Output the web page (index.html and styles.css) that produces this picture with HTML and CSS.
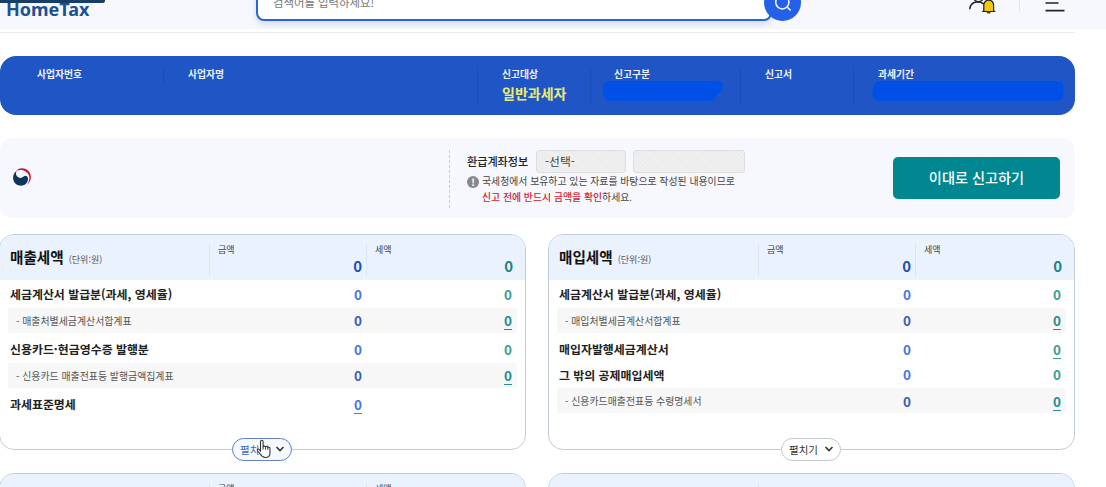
FILE: index.html
```html
<!DOCTYPE html>
<html lang="ko">
<head>
  <meta charset="UTF-8" />
  <meta name="viewport" content="width=device-width, initial-scale=1.0" />
  <title>HomeTax</title>
  <link rel="stylesheet" href="styles.css">
</head>
<body>
  <div class="top-strip"></div>
  <header class="header">
    <div class="logo">HomeTax</div>
    <div class="search">
      <div class="search-box">검색어를 입력하세요!</div>
      <div class="search-btn">
        <svg width="20" height="20" viewBox="0 0 20 20" fill="none" stroke="#fff" stroke-width="1.5" stroke-linecap="round">
          <circle cx="9.3" cy="9.3" r="6.6" />
          <path d="M14 14l3.2 3" />
        </svg>
      </div>
    </div>
    <div class="tools">
      <svg class="user-icon" width="30" height="26" viewBox="0 0 30 26" fill="none" stroke="#222" stroke-width="1.5" stroke-linecap="round">
        <circle cx="10.5" cy="9" r="4.7" />
        <path d="M1.800 20.700c.6-4.200 3.200-6.500 7.200-7 3.200 0 5 .600 6.500 2.300" />
        <path d="M15.800 22.700V17a4.900 4.900 0 0 1 9.800 0v5.700l.8.800h-11.400z" fill="#f2c80f" stroke-width="1.200" />
        <path d="M19.500 24.600h2.400" stroke="#5c4a00" stroke-width="1.600" />
      </svg>
      <span class="tools-line"></span>
      <svg class="menu-icon" width="20" height="20" viewBox="0 0 20 20" stroke="#222" stroke-width="1.7">
        <path d="M0.500 3.300h19M0.500 11h13M0.500 18.600h19" />
      </svg>
    </div>
  </header>

  <main class="content">
    <section class="info-bar">
      <div class="info-item item-no"><span class="info-label">사업자번호</span></div>
      <div class="info-item item-name"><span class="info-label">사업자명</span></div>
      <div class="info-item item-target">
        <span class="info-label">신고대상</span>
        <strong class="info-value">일반과세자</strong>
      </div>
      <div class="info-item item-type">
        <span class="info-label">신고구분</span>
        <svg class="mask" width="121" height="21" viewBox="0 0 121 21"><path d="M7 0h107c9 0 6 11 0 13-1 5-3 7-7 7H8c-6 0-8-4-8-10s2-10 7-10z" fill="#004fe6" /></svg>
      </div>
      <div class="info-item item-form"><span class="info-label">신고서</span></div>
      <div class="info-item item-period">
        <span class="info-label">과세기간</span>
        <svg class="mask" width="193" height="21" viewBox="0 0 193 21"><path d="M8 0h176c6 0 8 4 7 9 2 7-1 11-7 11H7c-6 0-8-6-6-11 0-5 2-9 7-9z" fill="#004fe6" /></svg>
      </div>
    </section>

    <section class="report">
      <svg class="emblem" width="18" height="18" viewBox="0 0 18 18">
        <path d="M3 2.800C8-2.200 17.500.500 17.900 9c0 4-2 6.600-4.300 8.100 2.300-2.600 3.500-6.400 2.300-9.600C14 2.600 8 .900 3 2.800z" fill="#c9163a" />
        <path d="M3.600 3C-.900 6-1.200 12.800 3.300 16.200c4.700 3.300 11.500.600 11.700-5.300.100-2.700-2.600-4-4.400-2.400-1.500 1.400-3.100 1.800-4.900 1C3 8.300 2.400 5.400 3.600 3z" fill="#0c3559" />
      </svg>
      <div class="account">
        <div class="account-row">
          <span class="account-label">환급계좌정보</span>
          <span class="field field-select">-선택-</span>
          <span class="field field-input"></span>
        </div>
        <div class="notice">
          <span class="notice-icon">!</span>
          <p>국세청에서 보유하고 있는 자료를 바탕으로 작성된 내용이므로<br><em>신고 전에 반드시 금액을 확인</em>하세요.</p>
        </div>
      </div>
      <button class="submit-btn">이대로 신고하기</button>
    </section>

    <section class="cards">
      <div class="card">
        <div class="card-head">
          <h2>매출세액 <small>(단위:원)</small></h2>
          <div class="head-cell"><span>금액</span><b class="amount">0</b></div>
          <div class="head-cell"><span>세액</span><b class="tax">0</b></div>
        </div>
        <div class="card-body">
          <div class="row"><span>세금계산서 발급분(과세, 영세율)</span><b>0</b><b>0</b></div>
          <div class="row sub"><span>- 매출처별세금계산서합계표</span><b>0</b><b><u>0</u></b></div>
          <div class="row"><span>신용카드·현금영수증 발행분</span><b>0</b><b>0</b></div>
          <div class="row sub"><span>- 신용카드 매출전표등 발행금액집계표</span><b>0</b><b><u>0</u></b></div>
          <div class="row"><span>과세표준명세</span><b><u>0</u></b></div>
        </div>
        <button class="more active">펼치기
          <svg width="10" height="6" viewBox="0 0 10 6"><path d="M1.500 1l3.500 3.600L8.500 1" /></svg>
        </button>
        <svg class="cursor" width="16" height="20" viewBox="0 0 16 20">
          <path d="M4.500 12V2.700c0-2 2.600-2 2.600 0V8c.200-1.300 2.300-1.200 2.400.300.300-1.200 2.200-1 2.300.500.400-1 2.100-.800 2.200.700v4.200c0 3.200-1.800 4.800-4.600 4.800-2.700 0-3.800-1.200-5-3.200L1.500 11.800c-.800-1.500.900-2.300 1.800-1.200z" fill="#fff" stroke="#333" stroke-width="1.100" />
          <path d="M7.100 8v2.500M9.500 8.300v2.300M11.800 8.800v2" stroke="#333" stroke-width="1" />
        </svg>
      </div>

      <div class="card">
        <div class="card-head">
          <h2>매입세액 <small>(단위:원)</small></h2>
          <div class="head-cell"><span>금액</span><b class="amount">0</b></div>
          <div class="head-cell"><span>세액</span><b class="tax">0</b></div>
        </div>
        <div class="card-body">
          <div class="row"><span>세금계산서 발급분(과세, 영세율)</span><b>0</b><b>0</b></div>
          <div class="row sub"><span>- 매입처별세금계산서합계표</span><b>0</b><b><u>0</u></b></div>
          <div class="row"><span>매입자발행세금계산서</span><b>0</b><b><u>0</u></b></div>
          <div class="row"><span>그 밖의 공제매입세액</span><b>0</b><b>0</b></div>
          <div class="row sub"><span>- 신용카드매출전표등 수령명세서</span><b>0</b><b><u>0</u></b></div>
        </div>
        <button class="more">펼치기
          <svg width="10" height="6" viewBox="0 0 10 6"><path d="M1.500 1l3.500 3.600L8.500 1" /></svg>
        </button>
      </div>

      <div class="card">
        <div class="card-head">
          <h2></h2>
          <div class="head-cell"><span>금액</span></div>
          <div class="head-cell"><span>세액</span></div>
        </div>
      </div>

      <div class="card">
        <div class="card-head">
          <h2></h2>
          <div class="head-cell"></div>
          <div class="head-cell no-line"></div>
        </div>
      </div>
    </section>
  </main>
</body>
</html>
```

FILE: styles.css
```css
* {
  box-sizing: border-box;
}
html {
  height: 100%;
  overflow: hidden;
}
body {
  height: 100%;
  margin: 0;
  overflow: hidden;
  font-family: 'Noto Sans CJK KR', 'Noto Sans', sans-serif;
  font-size: 10px;
  color: #222;
  background-color: #fff;
}
h2, p {
  margin: 0;
}
button {
  font-family: inherit;
  padding: 0;
}

/* header, scrolled partly out of view */
.top-strip {
  position: absolute;
  left: 0;
  top: 0;
  width: 105px;
  height: 3px;
  background-color: #173e68;
  border-radius: 0 0 2px 0;
  z-index: 2;
}
.header {
  display: flex;
  height: 61px;
  margin-top: -32px;
  background-color: #f7f8fe;
}
.logo {
  width: 256px;
  padding: 27px 0 0 6px;
  font-family: 'Noto Sans', sans-serif;
  font-size: 18px;
  font-weight: 700;
  line-height: 28px;
  color: #1b5294;
}
.search {
  display: flex;
  padding-top: 11px;
}
.search-box {
  width: 516px;
  height: 42px;
  padding-left: 15px;
  border: 2px solid #2b63cf;
  border-radius: 8px;
  background-color: #fff;
  box-shadow: 0 3px 6px rgba(40, 70, 120, 0.16);
  font-size: 11.4px;
  line-height: 43px;
  color: #777;
}
.search-btn {
  display: flex;
  align-items: center;
  justify-content: center;
  width: 37px;
  height: 37px;
  margin: 5px 0 0 -8px;
  border-radius: 50%;
  background-color: #2461e8;
}
.tools {
  display: flex;
  align-items: flex-start;
  margin-left: 167px;
}
.user-icon {
  margin-top: 20px;
}
.tools-line {
  width: 1px;
  height: 18px;
  margin: 25px 25px 0 21px;
  background-color: #e3e4ea;
}
.menu-icon {
  margin-top: 23.5px;
}

.content {
  width: 1075px;
  margin-top: 3px;
  padding-top: 23px;
  border-top: 1px solid #ececf0;
}

/* taxpayer bar */
.info-bar {
  display: flex;
  height: 59px;
  padding-top: 11px;
  border-radius: 16px;
  background-color: #1f55c4;
  color: #fff;
}
.info-item {
  display: flex;
  flex-direction: column;
  position: relative;
  height: 37px;
  padding-left: 24px;
  border-left: 1px solid #1c4db4;
}
.info-item:first-child {
  border-left: 0;
  padding-left: 37px;
}
.item-no { width: 163px; }
.item-name { width: 314px; height: 16px; }
.item-target { width: 113px; }
.item-type { width: 150px; }
.item-form { width: 113px; }
.item-period { width: 222px; }
.item-type .info-label {
  margin-left: -1px;
}
.info-label {
  font-size: 9.8px;
  font-weight: 700;
  line-height: 15px;
  color: #eef3ff;
}
.info-value {
  margin-top: 2px;
  font-size: 14px;
  font-weight: 700;
  line-height: 18px;
  color: #ecec70;
}
.mask {
  position: absolute;
  left: 12px;
  top: 14px;
}
.item-period .mask {
  left: 18px;
}

/* refund account and submit */
.report {
  display: flex;
  align-items: flex-start;
  height: 80px;
  margin-top: 23px;
  padding: 12px 15px 0 13px;
  border-radius: 12px;
  background-color: #f7f8fe;
}
.emblem {
  margin-top: 18px;
}
.account {
  height: 58px;
  margin-left: 418px;
  padding-left: 17px;
  border-left: 1px dashed #ccc;
}
.account-row {
  display: flex;
  align-items: center;
  height: 23px;
}
.account-label {
  width: 69px;
  margin-top: -2px;
  font-size: 11.1px;
  font-weight: 500;
}
.field {
  height: 23px;
  border: 1px solid #dedede;
  border-radius: 3px;
  background: repeating-linear-gradient(45deg, #f1f1f1 0 1px, #ececec 1px 3px);
  font-size: 11.8px;
  line-height: 20px;
}
.field-select {
  width: 90px;
  margin-right: 7px;
  padding-left: 8px;
  color: #444;
}
.field-input {
  width: 112px;
}
.notice {
  display: flex;
  font-size: 9.88px;
  line-height: 16px;
  color: #444;
}
.notice-icon {
  width: 12px;
  height: 12px;
  margin: 3px 3px 0 0;
  border-radius: 50%;
  background-color: #888;
  color: #fff;
  font-weight: 700;
  line-height: 12px;
  text-align: center;
}
.notice em {
  font-style: normal;
  font-weight: 500;
  color: #d3202f;
}
.submit-btn {
  width: 167px;
  height: 42px;
  margin: 7px 0 0 auto;
  padding-bottom: 2px;
  border: 0;
  border-radius: 5px;
  background-color: #008792;
  color: #fff;
  font-size: 14.2px;
  font-weight: 500;
}

/* tax cards */
.cards {
  display: grid;
  grid-template-columns: 527px 527px;
  column-gap: 22px;
  row-gap: 23px;
  margin: 16px 0 0 -1px;
}
.card {
  position: relative;
  height: 216px;
  border: 1px solid #c3cbdb;
  border-radius: 15px;
}
.card-head {
  display: grid;
  grid-template-columns: 209px 157px 1fr;
  height: 45px;
  padding-top: 9px;
  border-radius: 14px 14px 0 0;
  background-color: #eaf2fe;
}
.card-head h2 {
  padding-left: 10px;
  font-size: 14.6px;
  line-height: 26px;
  color: #111;
}
.card-head small {
  margin-left: 1px;
  font-size: 9px;
  font-weight: 400;
  color: #555;
}
.head-cell {
  height: 32px;
  padding-left: 8px;
  border-left: 1px solid #dbe4f2;
  font-size: 9px;
  line-height: 12px;
  color: #444;
}
.head-cell.no-line {
  border-left-color: transparent;
}
.head-cell b {
  display: block;
  padding-right: 4px;
  font-size: 15px;
  line-height: 19px;
  text-align: right;
}
.head-cell b.amount {
  color: #274fae;
}
.head-cell b.tax {
  padding-right: 12px;
  color: #1c8389;
}
.card-body {
  padding: 1px 8px 0;
}
.row {
  display: grid;
  grid-template-columns: 200px 152px 150px;
  align-items: center;
  height: 25.5px;
  padding-left: 2px;
  font-size: 11.93px;
}
.row span {
  font-weight: 700;
  white-space: nowrap;
}
.row b {
  font-size: 13.5px;
  font-weight: 700;
  line-height: 16px;
  text-align: right;
  color: #4777e2;
}
.row b:nth-child(3) {
  color: #3a9f8e;
}
.row u {
  text-underline-offset: 3px;
  text-decoration-thickness: 1px;
}
.row.sub {
  height: 25px;
  margin: 1px 0 3.5px;
  padding-left: 8px;
  grid-template-columns: 194px 152px 150px;
  background-color: #f7f7f8;
}
.row.sub span {
  font-size: 9.92px;
  font-weight: 400;
  color: #555;
}
.row.sub b {
  color: #3b5db5;
}
.row.sub b:nth-child(3) {
  color: #248e90;
}

/* expand button sits on the card border */
.more {
  display: flex;
  align-items: center;
  justify-content: space-between;
  position: absolute;
  left: 232px;
  bottom: -12px;
  width: 60px;
  height: 23px;
  padding: 0 6px 1px 7px;
  border: 1px solid #c4c8cf;
  border-radius: 12px;
  background-color: #fff;
  font-size: 10.5px;
  color: #333;
}
.more svg {
  fill: none;
  stroke: #333;
  stroke-width: 1.5;
}
.more.active {
  border-color: #6480bd;
  background-color: #f6f9ff;
  color: #3c68b9;
}
.cursor {
  position: absolute;
  left: 256px;
  top: 204px;
}
```
